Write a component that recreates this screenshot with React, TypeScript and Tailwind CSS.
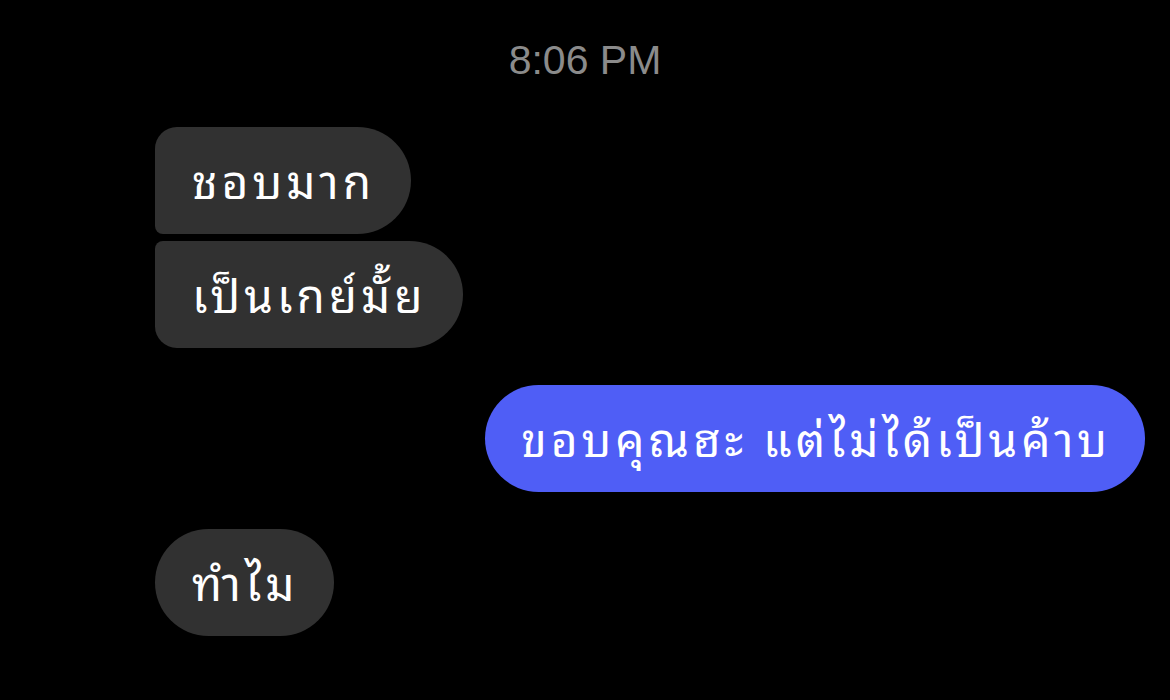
import React from 'react';

const thai = { fontFamily: '"Noto Sans Thai Looped", "Noto Sans Thai", "Noto Sans", "DejaVu Sans", sans-serif' };

type Msg = { text: string; mine?: boolean; corner?: string };

const messages: Msg[] = [
  { text: 'ชอบมาก', corner: 'rounded-l-[22px] rounded-bl-[8px] rounded-r-[54px]' },
  { text: 'เป็นเกย์มั้ย', corner: 'rounded-l-[22px] rounded-tl-[8px] rounded-r-[54px]' },
];

function Bubble({ text, mine, corner }: Msg) {
  return (
    <div
      className={`h-[107px] flex items-center pb-[6px] text-white text-[46px] tracking-[4px] leading-none whitespace-nowrap ${
        mine ? 'bg-[#4f5ef6] rounded-[54px] pl-[36px] pr-[34px]' : `bg-[#313131] pl-[37px] pr-[36px] ${corner ?? 'rounded-[54px]'}`
      }`}
      style={thai}
    >
      {text}
    </div>
  );
}

export default function App() {
  return (
    <div className="w-[1170px] h-[700px] bg-black overflow-hidden">
      {/* Timestamp */}
      <div
        className="pt-[38px] text-center text-[41px] leading-[44px] text-[#8b8b8b]"
        style={{ fontFamily: '"Liberation Sans", Arial, sans-serif' }}
      >
        8:06 PM
      </div>

      <div className="flex flex-col pl-[155px] pr-[25px] pt-[45px]">
        {/* Incoming group */}
        <div className="flex flex-col items-start gap-[7px]">
          {messages.map((m) => (
            <Bubble key={m.text} {...m} />
          ))}
        </div>

        {/* Outgoing */}
        <div className="flex justify-end mt-[37px]">
          <Bubble text="ขอบคุณฮะ แต่ไม่ได้เป็นค้าบ" mine />
        </div>

        {/* Incoming */}
        <div className="flex items-start mt-[37px]">
          <Bubble text="ทำไม" />
        </div>
      </div>
    </div>
  );
}
